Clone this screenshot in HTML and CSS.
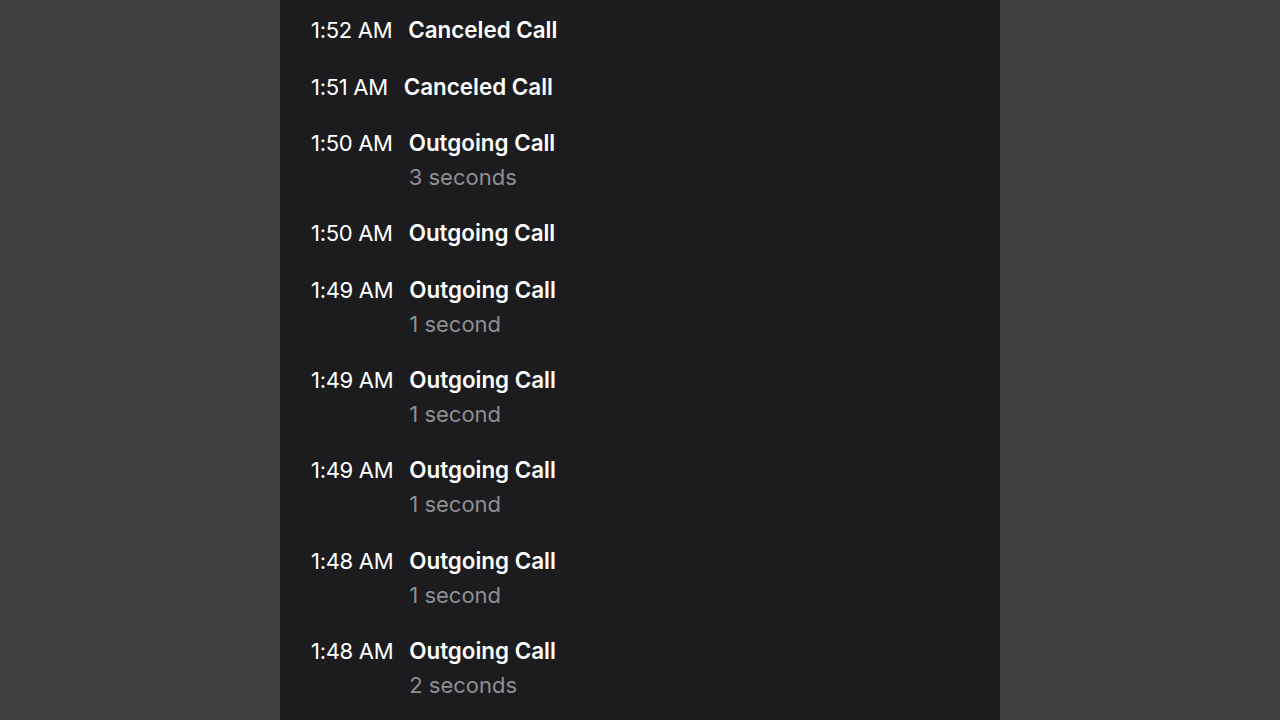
FILE: index.html
```html
<!DOCTYPE html>
<html lang="en">
<head>
  <meta charset="UTF-8">
  <meta name="viewport" content="width=device-width, initial-scale=1">
  <title>Call Details</title>
  <link rel="stylesheet" href="styles.css">
</head>
<body>

<div class="screen">
  <div class="call-row">
    <span class="time">1:52 AM</span>
    <div class="info">
      <div class="type">Canceled Call</div>
    </div>
  </div>
  <div class="call-row">
    <span class="time">1:51 AM</span>
    <div class="info">
      <div class="type">Canceled Call</div>
    </div>
  </div>
  <div class="call-row">
    <span class="time">1:50 AM</span>
    <div class="info">
      <div class="type">Outgoing Call</div>
      <div class="duration">3 seconds</div>
    </div>
  </div>
  <div class="call-row">
    <span class="time">1:50 AM</span>
    <div class="info">
      <div class="type">Outgoing Call</div>
    </div>
  </div>
  <div class="call-row">
    <span class="time">1:49 AM</span>
    <div class="info">
      <div class="type">Outgoing Call</div>
      <div class="duration">1 second</div>
    </div>
  </div>
  <div class="call-row">
    <span class="time">1:49 AM</span>
    <div class="info">
      <div class="type">Outgoing Call</div>
      <div class="duration">1 second</div>
    </div>
  </div>
  <div class="call-row">
    <span class="time">1:49 AM</span>
    <div class="info">
      <div class="type">Outgoing Call</div>
      <div class="duration">1 second</div>
    </div>
  </div>
  <div class="call-row">
    <span class="time">1:48 AM</span>
    <div class="info">
      <div class="type">Outgoing Call</div>
      <div class="duration">1 second</div>
    </div>
  </div>
  <div class="call-row">
    <span class="time">1:48 AM</span>
    <div class="info">
      <div class="type">Outgoing Call</div>
      <div class="duration">2 seconds</div>
    </div>
  </div>
</div>

</body>
</html>
```

FILE: styles.css
```css
body {
  background: #3f3f3f;
  font-family: Inter, "Noto Sans", sans-serif;
  color: white;
  margin: 0;
  height: 720px;
  overflow: hidden;
  display: flex;
  justify-content: center;
}
.screen {
  background: #1c1c1e;
  width: 720px;
  height: 720px;
  padding: 2px 0 0 31px;
  box-sizing: border-box;
}
.call-row {
  display: flex;
  gap: 16px;
  padding: 11.2px 0;
  font-size: 22px;
  line-height: 34px;
}
.time {
  font-weight: 400;
  letter-spacing: -0.3px;
}
.type {
  font-weight: 600;
  font-size: 22.4px;
}
.duration {
  color: #8e8e93;
  font-size: 22px;
}
```
